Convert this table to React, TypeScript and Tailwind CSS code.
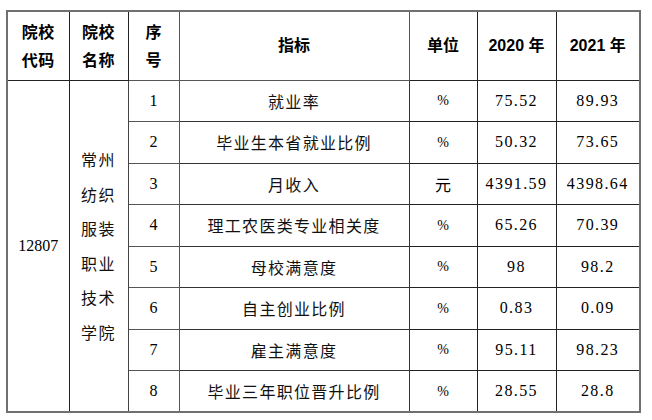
const rows = [
  { no: "1", name: "就业率", unit: "%", y2020: "75.52", y2021: "89.93" },
  { no: "2", name: "毕业生本省就业比例", unit: "%", y2020: "50.32", y2021: "73.65" },
  { no: "3", name: "月收入", unit: "元", y2020: "4391.59", y2021: "4398.64" },
  { no: "4", name: "理工农医类专业相关度", unit: "%", y2020: "65.26", y2021: "70.39" },
  { no: "5", name: "母校满意度", unit: "%", y2020: "98", y2021: "98.2" },
  { no: "6", name: "自主创业比例", unit: "%", y2020: "0.83", y2021: "0.09" },
  { no: "7", name: "雇主满意度", unit: "%", y2020: "95.11", y2021: "98.23" },
  { no: "8", name: "毕业三年职位晋升比例", unit: "%", y2020: "28.55", y2021: "28.8" },
];

const serif = "font-['Liberation_Serif','Noto_Sans_CJK_SC',serif]";
const cjk = "font-['Noto_Sans_CJK_SC',sans-serif]";
const head = "font-['Liberation_Sans','Noto_Sans_CJK_SC',sans-serif] font-bold text-[16px]";

export default function App() {
  return (
    <div className="w-[652px] h-[420px] bg-white pt-[10px] pl-[6px]">
      <table className="table-fixed w-[633px] border-collapse border-2 border-[#707070] text-black">
        <colgroup>
          <col className="w-[62px]" />
          <col className="w-[59px]" />
          <col className="w-[51px]" />
          <col className="w-[230px]" />
          <col className="w-[68px]" />
          <col className="w-[79px]" />
          <col className="w-[84px]" />
        </colgroup>
        <thead>
          <tr className={`h-[69px] ${head}`}>
            <th className="border border-[#222] leading-[28px] pt-[3px] tracking-[0.5px]">
              院校<br />代码
            </th>
            <th className="border border-[#222] leading-[28px] pt-[3px] tracking-[0.5px]">
              院校<br />名称
            </th>
            <th className="border border-[#555] leading-[28px] pt-[3px]">
              序<br />号
            </th>
            <th className="border border-[#555]">指标</th>
            <th className="border border-[#222]">单位</th>
            <th className="border border-[#222]">2020 年</th>
            <th className="border border-[#222]">2021 年</th>
          </tr>
        </thead>
        <tbody className="text-[16px]">
          {rows.map((r, i) => (
            <tr key={r.no} className="h-[41.5px]">
              {i === 0 && (
                <>
                  <td rowSpan={8} className={`border border-[#222] text-center ${serif}`}>
                    12807
                  </td>
                  <td rowSpan={8} className={`border border-[#444] text-center leading-[34.5px] tracking-[1.5px] text-[#111] ${cjk}`}>
                    常州<br />纺织<br />服装<br />职业<br />技术<br />学院
                  </td>
                </>
              )}
              <td className={`border border-[#555] text-center ${serif}`}>{r.no}</td>
              <td className={`border border-[#333] text-center tracking-[1.3px] text-[#111] ${cjk}`}>{r.name}</td>
              <td className={`border border-[#222] text-center ${r.unit === "元" ? cjk : serif} ${r.unit === "%" ? "text-[14px]" : ""}`}>
                {r.unit}
              </td>
              <td className={`border border-[#222] text-center tracking-[1.4px] ${serif}`}>{r.y2020}</td>
              <td className={`border border-[#222] text-center tracking-[1.4px] ${serif}`}>{r.y2021}</td>
            </tr>
          ))}
        </tbody>
      </table>
    </div>
  );
}
